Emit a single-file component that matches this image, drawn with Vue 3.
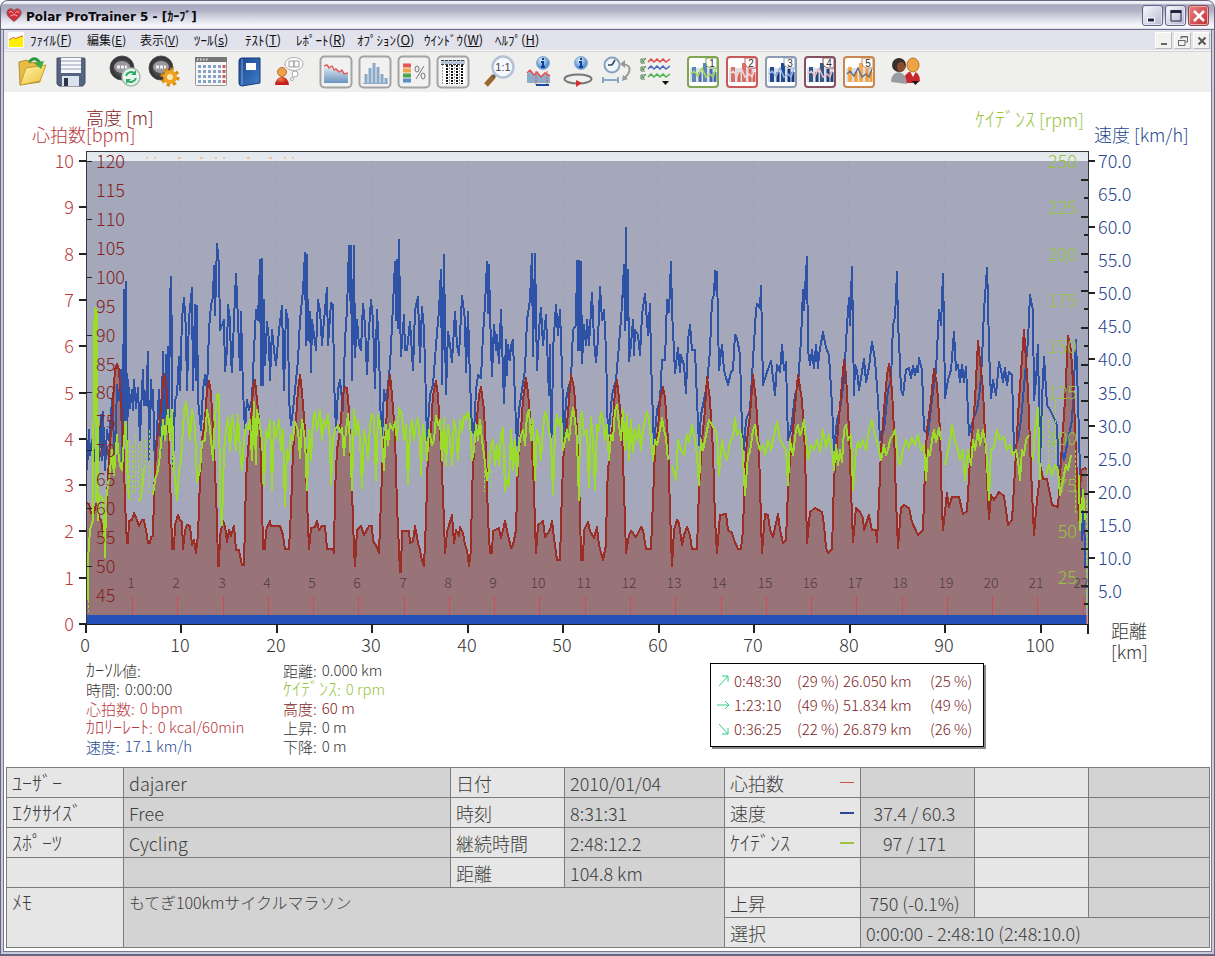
<script setup>
const menus = [
  { text: 'ﾌｧｲﾙ', key: 'F', kana: true },
  { text: '編集', key: 'E' },
  { text: '表示', key: 'V' },
  { text: 'ﾂｰﾙ', key: 's', kana: true },
  { text: 'ﾃｽﾄ', key: 'T', kana: true },
  { text: 'ﾚﾎﾟｰﾄ', key: 'R', kana: true },
  { text: 'ｵﾌﾟｼｮﾝ', key: 'O', kana: true },
  { text: 'ｳｲﾝﾄﾞｳ', key: 'W', kana: true },
  { text: 'ﾍﾙﾌﾟ', key: 'H', kana: true },
]

const presets = [
  { n: 1, frame: '#7fa653', bar: '#4a6aa8', line: '#a5d85a', bars: '#5f87b5' },
  { n: 2, frame: '#c9585a', bar: '#e2604f', line: '#f6d6d6', bars: '#d97165' },
  { n: 3, frame: '#8d9ab2', bar: '#16377e', line: '#8fb6e6', bars: '#24498f' },
  { n: 4, frame: '#85515e', bar: '#23406f', line: '#e9b9c4', bars: '#34578a' },
  { n: 5, frame: '#c8874f', bar: '#f59a2c', line: '#6d6f86', bars: '#f7ab4e' },
]

const bpmTicks = Array.from({ length: 11 }, (_, i) => ({ v: i, y: Math.round(624 - i * 46.3) }))
const altLabels = Array.from({ length: 16 }, (_, i) => ({ v: 45 + i * 5, y: Math.round(595 - i * 28.93) }))
const altTicks = altLabels.filter((t) => t.v % 10 === 0)
const speedLabels = Array.from({ length: 14 }, (_, i) => ({ v: (5 + i * 5).toFixed(1), y: Math.round(591 - i * 33.08), major: (5 + i * 5) % 10 === 0 }))
const cadLabels = Array.from({ length: 10 }, (_, i) => ({ v: 25 + i * 25, y: Math.round(577 - i * 46.2) }))
const cadTicks = Array.from({ length: 24 }, (_, i) => ({ y: Math.round(180 + i * 18.45), long: i % 2 === 0 }))
const kmTicks = Array.from({ length: 11 }, (_, i) => ({ v: i * 10, x: Math.round(86 + i * 95.45) }))
const laps = Array.from({ length: 22 }, (_, i) => ({ v: i + 1, x: Math.round(131 + i * 45.25), lx: Math.round(132 + i * 45.27) }))

const altitude = `87,503 89,504 91,513 94,513 96,504 98,504 99,518 101,520 103,533 105,533 108,478 110,440 112,428 113,400 115,370 117,364 119,370 121,400 123,430 125,500 126,525 127,543 128,543 129,521 132,520 134,513 137,520 139,526 142,520 144,520 146,530 148,543 150,543 151,537 153,536 154,495 155,470 157,440 160,420 162,392 164,374 166,382 168,412 170,480 171,505 172,549 174,549 175,525 178,515 180,520 182,522 183,549 185,530 187,525 190,526 192,545 194,540 196,553 198,535 200,480 202,440 205,420 207,390 209,381 211,393 213,430 215,470 217,520 218,566 219,566 220,535 223,521 225,526 227,542 229,530 231,536 234,526 236,550 239,550 242,565 244,565 246,480 248,450 251,420 253,390 255,380 257,400 260,430 262,500 263,549 265,549 266,530 270,521 271,526 280,526 283,535 285,549 289,549 291,510 293,450 296,420 298,390 300,375 302,392 305,430 307,500 309,549 311,528 315,527 317,521 319,530 322,526 325,526 327,549 333,549 334,553 335,490 337,450 340,430 343,395 345,387 347,388 349,410 350,445 352,490 354,550 355,566 357,530 361,526 364,535 369,526 372,526 373,541 377,547 379,553 381,500 383,450 386,428 388,390 390,375 392,395 395,435 397,505 399,550 400,572 401,572 402,531 409,531 410,543 413,541 415,526 418,543 420,550 422,560 424,566 426,520 428,450 431,430 433,395 436,381 438,395 441,450 444,520 445,553 447,532 452,515 454,543 456,530 459,536 460,527 463,533 465,545 467,550 469,566 471,550 472,490 474,450 476,430 479,395 481,387 484,410 486,450 488,520 490,553 492,553 493,531 499,528 501,538 503,530 505,521 508,535 511,548 513,545 516,530 518,460 521,430 523,400 526,378 528,392 531,430 534,490 535,525 536,553 538,525 543,521 545,537 550,530 552,521 554,538 557,560 560,560 562,490 564,445 567,425 569,400 571,375 574,388 577,430 580,510 581,560 583,560 584,530 588,522 590,531 594,538 597,527 599,545 603,560 606,545 607,490 610,440 613,425 615,390 617,380 619,398 622,430 624,490 626,553 629,535 631,531 636,537 641,527 643,530 646,549 651,549 653,500 655,450 658,430 660,400 663,387 665,398 668,440 670,510 671,540 672,566 674,530 677,520 679,523 682,545 684,535 687,527 690,535 692,549 697,549 699,490 702,440 705,410 707,377 710,400 713,450 715,520 717,553 720,515 726,514 728,530 732,533 734,540 738,549 741,549 743,530 745,470 747,440 750,415 753,375 756,400 759,450 761,520 762,553 765,514 768,515 770,530 773,537 778,514 780,530 783,543 786,540 788,490 790,460 793,430 796,395 798,375 802,400 805,450 807,543 810,512 815,508 822,512 824,525 826,548 828,553 832,549 834,480 838,430 841,395 844,360 846,375 849,430 851,490 853,542 856,508 860,512 863,518 864,530 869,515 872,530 876,530 877,542 879,500 881,450 884,410 887,375 889,364 892,390 894,430 896,500 898,548 901,508 904,505 909,508 912,522 918,535 923,530 925,470 927,430 931,400 934,369 937,385 940,430 942,510 943,530 947,493 949,507 952,497 959,497 963,514 967,511 970,460 975,400 978,341 983,390 987,480 989,519 991,495 994,500 999,492 1004,496 1008,525 1012,520 1015,470 1019,400 1024,330 1028,390 1031,470 1034,535 1037,500 1041,468 1043,479 1047,479 1052,505 1058,507 1061,460 1065,400 1068,336 1071,350 1074,400 1077,480 1079,520 1081,470 1085,468 1087,470`

const speed = `87,470 89,430 90,455 92,440 94,452 96,465 98,440 99,460 101,415 102,460 103,412 105,470 107,430 109,440 112,400 115,460 117,385 119,400 121,370 122,470 123,400 124,290 125,420 126,282 127,457 128,380 130,408 132,390 133,410 134,380 136,408 138,388 140,440 141,410 143,370 144,405 146,405 148,352 149,460 151,380 152,408 153,390 155,470 157,430 159,390 161,450 163,352 164,440 166,355 167,430 168,347 169,420 170,300 171,277 172,350 173,469 175,400 177,395 179,357 180,390 182,318 184,298 186,330 187,390 189,318 192,288 193,390 195,305 196,380 197,306 198,400 201,430 203,390 205,375 207,390 209,330 211,305 213,297 214,266 215,315 217,244 219,265 220,330 222,325 224,320 225,371 227,350 228,305 230,320 231,360 232,372 234,320 236,274 238,320 240,370 241,312 243,390 245,430 247,400 249,410 252,400 254,350 256,310 258,320 260,260 261,385 262,259 263,385 264,300 265,365 267,322 269,340 270,380 272,330 274,350 276,365 279,330 282,306 284,390 286,310 288,320 289,400 291,425 293,410 294,400 296,380 298,360 300,320 303,290 305,253 306,345 307,255 308,340 310,312 311,372 312,320 314,335 316,350 318,300 320,310 322,345 324,320 327,288 328,345 331,303 333,305 334,380 336,430 338,390 340,380 343,410 345,340 347,310 349,246 350,300 351,246 352,380 354,246 355,357 357,320 359,345 361,350 363,304 365,325 367,374 369,330 371,300 373,320 375,388 377,310 379,350 381,430 382,440 384,390 386,400 388,385 390,365 393,305 395,262 396,320 397,260 398,328 399,240 400,310 401,356 404,315 405,350 407,350 410,322 413,370 415,310 418,297 420,362 422,307 424,330 426,400 427,440 430,395 433,385 436,345 439,310 441,270 442,384 444,255 445,330 446,394 448,332 450,345 452,362 455,312 457,345 459,355 462,296 465,320 466,372 468,312 470,380 472,430 474,433 476,390 478,375 481,378 483,335 485,305 487,262 488,313 489,265 490,313 492,376 494,325 496,350 497,335 499,363 501,310 504,403 506,340 507,375 508,345 510,360 511,345 513,340 515,400 517,445 519,410 522,390 525,370 527,320 530,300 532,254 533,356 535,254 537,370 539,330 541,308 543,345 546,315 548,370 549,395 550,345 551,440 552,430 553,350 556,305 558,335 560,310 562,370 564,440 566,400 569,385 571,380 573,330 576,325 577,261 578,350 579,261 580,350 581,262 582,363 584,325 586,345 587,320 589,345 592,293 594,340 596,362 598,340 600,287 602,320 604,310 606,350 608,440 610,420 612,395 616,380 619,345 622,305 624,265 625,330 626,228 627,320 628,270 629,361 631,345 633,320 634,355 635,330 638,335 640,355 642,315 645,294 648,335 650,304 651,360 653,420 654,445 657,410 660,400 662,360 665,360 667,300 669,312 671,262 672,312 673,330 675,373 678,348 680,372 681,355 684,365 686,393 688,340 690,325 692,350 695,350 697,400 699,445 701,415 704,400 707,385 710,350 712,300 714,295 715,271 716,290 717,272 719,370 722,345 724,370 728,385 731,372 733,370 735,335 737,338 740,355 742,430 744,450 746,420 750,410 753,360 756,310 757,304 760,308 761,286 763,385 767,372 771,361 773,378 775,395 777,365 780,372 782,345 784,370 786,362 788,440 791,430 795,395 798,385 801,340 803,290 804,310 805,290 807,257 808,350 810,365 812,350 814,368 816,345 818,368 819,355 823,332 826,348 829,355 832,405 834,450 837,420 840,410 844,380 847,325 849,298 850,325 852,267 853,330 854,395 855,365 857,370 859,390 861,378 864,359 866,382 869,367 872,342 875,360 878,400 880,440 884,430 888,390 891,380 893,325 895,317 897,272 898,325 899,340 901,390 903,395 906,370 909,368 911,378 913,366 915,375 917,366 918,372 919,358 922,370 924,430 928,435 932,400 936,370 939,310 941,325 943,274 944,325 945,398 948,380 951,370 954,332 956,370 958,365 960,382 962,365 964,382 966,367 969,435 973,420 977,410 980,390 982,360 984,310 987,268 988,300 989,350 991,398 993,380 996,395 999,362 1001,370 1003,382 1005,368 1007,385 1009,372 1012,375 1014,450 1018,440 1021,420 1025,375 1028,340 1030,295 1033,310 1034,400 1036,380 1038,345 1040,465 1042,400 1044,357 1047,405 1050,410 1054,418 1057,425 1059,480 1062,450 1064,460 1068,440 1072,420 1076,340 1078,400 1080,470 1082,540 1084,500 1085,568`

const cadence = `88,600 88,560 90,530 93,520 94,330 95,308 96,500 97,310 98,520 100,495 103,500 105,557 106,500 110,470 112,450 114,475 117,435 118,450 120,466 122,470 124,440 126,422 128,490 130,500 M138,500 140,500 142,492 144,468 M153,495 155,480 158,470 160,455 163,420 165,440 168,410 170,440 172,410 174,470 177,500 179,470 181,460 184,412 186,402 188,420 190,440 192,410 195,428 197,482 200,470 202,442 205,440 207,410 209,420 211,440 213,460 215,418 217,395 219,394 220,500 222,525 224,450 226,430 228,418 230,450 232,415 234,430 236,450 238,415 240,450 242,470 244,440 246,425 248,430 250,420 252,460 254,402 256,464 257,410 259,420 262,440 264,485 266,430 268,438 270,420 272,490 274,422 276,438 279,420 281,450 283,430 285,506 287,450 289,460 291,435 293,440 295,422 298,430 300,458 302,420 305,440 307,490 309,430 311,460 313,420 315,412 317,430 320,410 322,440 324,420 326,428 328,414 330,440 331,485 333,440 335,430 338,425 340,432 342,428 344,455 346,430 348,414 350,440 352,490 354,410 356,435 358,420 360,440 362,488 364,430 366,440 368,460 370,425 372,414 374,418 376,480 378,415 380,422 382,440 384,470 386,425 388,445 390,424 393,430 395,422 397,440 399,408 402,415 404,440 406,425 408,484 410,430 412,420 414,440 416,425 418,418 420,440 421,475 423,425 425,435 427,460 429,430 432,445 434,440 436,416 438,425 440,420 442,460 444,418 446,465 448,425 450,440 452,465 454,420 456,430 458,460 460,420 462,432 464,415 466,420 468,412 470,420 472,460 474,450 476,425 478,440 480,420 482,440 484,455 487,480 489,470 491,445 493,440 495,465 497,445 499,465 501,435 503,428 505,490 507,480 509,485 511,430 513,470 515,440 517,475 519,445 521,435 523,430 525,445 527,415 529,410 531,440 533,420 535,480 537,430 539,440 541,460 543,430 545,412 547,418 549,430 551,440 553,494 555,430 557,415 559,425 561,418 563,450 565,440 567,430 569,440 571,420 573,408 575,420 577,440 579,500 580,420 582,412 584,435 587,430 589,487 591,418 593,440 595,490 597,425 599,430 601,412 603,420 605,440 607,425 609,460 611,435 613,440 615,410 617,405 619,425 621,440 623,410 625,450 627,415 629,460 631,420 633,452 635,430 637,440 639,425 641,450 643,430 645,420 647,412 649,420 651,440 653,460 655,440 657,445 659,435 662,418 664,430 666,438 668,460 M672,465 676,480 678,440 681,450 684,455 687,435 689,442 692,425 695,440 697,455 699,485 701,440 703,450 706,435 709,420 712,425 715,430 717,435 719,475 722,440 724,452 727,460 730,442 733,437 735,418 737,435 740,430 742,440 745,495 748,455 750,452 753,430 755,425 757,440 760,450 763,445 765,455 768,440 771,450 774,435 777,422 780,440 783,445 786,450 788,485 790,440 793,455 796,430 798,425 800,435 802,430 804,420 806,440 808,460 811,445 814,450 817,440 820,452 823,430 826,448 829,435 832,450 834,470 836,445 838,465 840,450 842,462 844,430 846,425 848,440 851,435 853,490 856,450 858,442 860,448 863,440 866,450 869,430 872,420 875,435 878,445 881,460 884,445 886,455 888,450 890,440 893,435 895,430 898,460 900,465 903,450 906,440 909,448 912,438 915,445 918,435 921,450 924,445 926,480 928,450 930,455 932,440 934,430 936,442 939,428 941,440 M945,465 948,450 950,442 952,425 955,440 958,450 960,460 963,450 965,480 968,450 971,465 973,440 975,450 978,430 980,445 983,430 986,445 989,500 991,450 994,447 997,430 1000,440 1004,437 1007,450 1010,445 1013,455 1016,450 1018,460 1020,480 1022,450 1024,455 1026,440 1029,435 M1033,460 1035,430 1038,408 1040,480 M1046,475 1049,465 1052,475 1055,465 1058,470 1060,495 1064,475 1066,465 1068,470 1071,455 M1079,475 1080,530 1083,490 1085,520`

const cadenceDots = 'M129,440V500M132,445V495M135,435V495M138,445V495M141,438V492M145,440V468M149,430V495M172,412V470M484,470V492M491,470V492M505,455V495M1043,410V450M1048,420V470M1055,400V460M1075,450V515M1086,500V610M88,560V612'

const cadencePath = 'M' + cadence

const cursorLeft = [
  { k: 'ｶｰｿﾙ', s: '値:', v: '', c: 'ink' },
  { k: '', s: '時間:', v: '0:00:00', c: 'ink' },
  { k: '', s: '心拍数:', v: '0 bpm', c: 'red' },
  { k: 'ｶﾛﾘｰﾚｰﾄ', s: ':', v: '0 kcal/60min', c: 'red' },
  { k: '', s: '速度:', v: '17.1 km/h', c: 'blue' },
]
const cursorRight = [
  { k: '', s: '距離:', v: '0.000 km', c: 'ink' },
  { k: 'ｹｲﾃﾞﾝｽ', s: ':', v: '0 rpm', c: 'green' },
  { k: '', s: '高度:', v: '60 m', c: 'maroon' },
  { k: '', s: '上昇:', v: '0 m', c: 'ink' },
  { k: '', s: '下降:', v: '0 m', c: 'ink' },
]
const slopes = [
  { d: 'M2 12L11 2M5 2H11V8', t: '0:48:30', p: '(29 %)', km: '26.050 km', q: '(25 %)' },
  { d: 'M0 7H12M8 3L12 7L8 11', t: '1:23:10', p: '(49 %)', km: '51.834 km', q: '(49 %)' },
  { d: 'M2 2L11 12M5 12H11V6', t: '0:36:25', p: '(22 %)', km: '26.879 km', q: '(26 %)' },
]
</script>

<template>
  <div class="window">
    <header class="titlebar">
      <svg class="logo" width="16" height="16" viewBox="0 0 16 16">
        <path d="M8 14.5C3 11 .8 8.500.8 5.500.8 1.500 6 .5 8 3.500 10 .5 15.200 1.500 15.200 5.500 15.200 8.500 13 11 8 14.500Z" fill="#cf2f3b" stroke="#8b6a70" stroke-width="1" />
        <path d="M3 5.500Q5 3 7.500 6M9 6Q11.500 3 13.500 5.500M4.500 9L8 7.500 11.500 9" stroke="#f4b5b5" fill="none" />
      </svg>
      <h1>Polar ProTrainer 5 - [ｶｰﾌﾞ]</h1>
      <div class="winbtns">
        <button aria-label="最小化"><svg width="20" height="20" viewBox="0 0 20 20"><path d="M4 14H12" stroke="#fff" stroke-width="5" /><path d="M5 14H11" stroke="#23233f" stroke-width="3" /></svg></button>
        <button aria-label="最大化"><svg width="20" height="20" viewBox="0 0 20 20"><path d="M5 5H15V15H5Z" fill="none" stroke="#23233f" stroke-width="1" /><path d="M4.500 5.500H15.500" stroke="#23233f" stroke-width="3" /></svg></button>
        <button class="close" aria-label="閉じる"><svg width="20" height="20" viewBox="0 0 20 20"><path d="M5 5L15 15M15 5L5 15" stroke="#fff" stroke-width="2.500" /></svg></button>
      </div>
    </header>

    <nav class="menubar">
      <svg width="16" height="16" viewBox="0 0 16 16"><rect width="16" height="16" fill="#fff" /><path d="M1 8L5 6 8 7 11 5 15 4V15H1Z" fill="#ffef00" /><path d="M1 8L5 5.500 8 6.500 11 5 15 4" stroke="#d07018" fill="none" /></svg>
      <div class="menus">
        <button v-for="m in menus" :key="m.key" :class="{ wider: m.kana }">{{ m.text }}(<u>{{ m.key }}</u>)</button>
      </div>
      <div class="docbtns">
        <button aria-label="文書を最小化"><svg width="16" height="16" viewBox="0 0 16 16"><path d="M5 11H11" stroke="#666" stroke-width="2" /></svg></button>
        <button aria-label="文書を元に戻す"><svg width="16" height="16" viewBox="0 0 16 16"><path d="M3.500 7.500H10V12.500H3.500ZM3 7.500H10.500M6 6V3.500H12.500V9H10.500M6 4H13" fill="none" stroke="#666" /></svg></button>
        <button aria-label="文書を閉じる"><svg width="16" height="16" viewBox="0 0 16 16"><path d="M4.500 4.500L11.500 11.500M11.500 4.500L4.500 11.500" stroke="#555" stroke-width="2" /></svg></button>
      </div>
    </nav>

    <div class="toolbar">
      <svg class="defs" width="0" height="0" aria-hidden="true">
        <defs>
          <linearGradient id="fold" x1="0" y1="0" x2="1" y2="1"><stop offset="0" stop-color="#fff7b0" /><stop offset="1" stop-color="#eebd35" /></linearGradient>
          <linearGradient id="book" x1="0" y1="0" x2="1" y2="1"><stop offset="0" stop-color="#1c4690" /><stop offset="1" stop-color="#3f7fca" /></linearGradient>
          <linearGradient id="haze" x1="0" y1="0" x2="0" y2="1"><stop offset="0" stop-color="#e2eaf3" /><stop offset="1" stop-color="#6c94bf" /></linearGradient>
          <linearGradient id="strip" x1="0" y1="0" x2="0" y2="1"><stop offset="0" stop-color="#e0e7ec" /><stop offset="1" stop-color="#e6ebf0" /></linearGradient>
          <radialGradient id="dark"><stop offset="0" stop-color="#777" /><stop offset="1" stop-color="#2c2c30" /></radialGradient>
          <radialGradient id="info" cx=".4" cy=".3"><stop offset="0" stop-color="#e5f1fc" /><stop offset="1" stop-color="#5f97d6" /></radialGradient>
          <radialGradient id="redman" cx=".4" cy=".3"><stop offset="0" stop-color="#f0794a" /><stop offset="1" stop-color="#c1201c" /></radialGradient>
        </defs>
      </svg>
      <div class="group">
        <button aria-label="開く"><svg viewBox="0 0 34 34"><path d="M4 7L12 5 14 8 24 7 25 27 5 30Z" fill="#e9bc45" stroke="#b78f2c" /><path d="M5 30L11 13 31 10 25 26Z" fill="url(#fold)" stroke="#c79e36" /><path d="M14 7Q20 0 25 8" fill="none" stroke="#2c9b3d" stroke-width="3" /><path d="M19 8L29 6 26 14Z" fill="#3fae46" /></svg></button>
        <button aria-label="保存"><svg viewBox="0 0 34 34"><path d="M3 3H30Q31 3 31 4V28L29 31H5L3 29Z" fill="#56657f" stroke="#414d63" /><rect x="7" y="3" width="20" height="15" fill="#f6f8fb" /><path d="M7 6H27M7 10H27M7 14H27" stroke="#b4bccb" stroke-width="1.500" /><rect x="8" y="21" width="17" height="10" fill="#dce3ec" /><rect x="10" y="23" width="4" height="8" fill="#2e3749" /></svg></button>
      </div>
      <div class="group wide">
        <button aria-label="転送"><svg viewBox="0 0 34 34"><circle cx="14" cy="13" r="12" fill="url(#dark)" stroke="#555" /><ellipse cx="14" cy="12" rx="8" ry="6" fill="#9a9a9e" /><path d="M9 12H19" stroke="#eee" stroke-width="3" stroke-dasharray="3 1" /><circle cx="23" cy="22" r="9" fill="#e9f6ee" stroke="#a9bdb0" stroke-width="1.500" /><path d="M18 21A5.500 5.500 0 0 1 27 18.500M28 23A5.500 5.500 0 0 1 19 25.500" fill="none" stroke="#2ea866" stroke-width="2" /><path d="M28 15V20H23ZM18 29V24H23Z" fill="#2ea866" /></svg></button>
        <button aria-label="機器の設定"><svg viewBox="0 0 34 34"><circle cx="14" cy="13" r="12" fill="url(#dark)" stroke="#555" /><ellipse cx="14" cy="12" rx="8" ry="6" fill="#9a9a9e" /><path d="M9 12H19" stroke="#eee" stroke-width="3" stroke-dasharray="3 1" /><circle cx="23" cy="22" r="7.500" fill="none" stroke="#d68a12" stroke-width="4" stroke-dasharray="3 2.900" /><circle cx="23" cy="22" r="5" fill="#f8e7b8" stroke="#f0a21c" stroke-width="4" /></svg></button>
      </div>
      <div class="group">
        <button aria-label="カレンダー"><svg viewBox="0 0 34 34"><rect x="1.500" y="2.500" width="31" height="28" rx="1" fill="#f7f7f7" stroke="#999" /><rect x="1" y="2" width="32" height="5" fill="#77777a" /><path d="M3 4.500H14" stroke="#ddd" stroke-width="2" stroke-dasharray="1.500 1.500" /><path d="M4 11.500H27M4 16.500H27M4 21.500H27M4 26.500H27" stroke="#86a3c5" stroke-width="3" stroke-dasharray="3 2" /><path d="M30 10V28" stroke="#cf5a5a" stroke-width="3" stroke-dasharray="3 2" /></svg></button>
        <button aria-label="日誌"><svg viewBox="0 0 34 34"><path d="M6 6Q6 3 9 3H27V28L9 31Q6 31 6 28Z" fill="url(#book)" stroke="#173a78" /><path d="M9 4V30" stroke="#7fa7dc" /><rect x="13" y="8" width="10" height="7" fill="#fff" /></svg></button>
        <button aria-label="人物"><svg viewBox="0 0 34 34"><circle cx="10" cy="17" r="4.500" fill="#eda24a" stroke="#bb6d26" /><path d="M3 30Q4 22 10 22 16 22 17 30Z" fill="url(#redman)" /><ellipse cx="22" cy="9" rx="9" ry="6.500" fill="#fff" stroke="#aaa" /><path d="M17 6H22V12H17ZM22 6H27V12H22Z" fill="none" stroke="#999" /><circle cx="23" cy="19" r="3" fill="#fff" stroke="#aaa" /><circle cx="20" cy="24" r="1.500" fill="#fff" stroke="#aaa" /></svg></button>
      </div>
      <div class="group">
        <button aria-label="カーブ"><svg viewBox="0 0 34 34"><rect class="frame" x="1.500" y="1.500" width="31" height="31" rx="4" /><path d="M5 11L8 14 11 12 14 16 17 14 20 17 23 15 26 19 29 18V28H5Z" fill="url(#haze)" /><path d="M5 11L8 10 10 13 13 11 15 15 17 14 20 17 23 15 25 19 29 18" fill="none" stroke="#e45a5c" stroke-width="1.500" /></svg></button>
        <button aria-label="分布"><svg viewBox="0 0 34 34"><rect class="frame" x="1.500" y="1.500" width="31" height="31" rx="4" /><path d="M8 28V19M12 28V13M16 28V8M20 28V12M24 28V19M28 28V23" stroke="#89a9c6" stroke-width="3" /><path d="M5 28.500H30" stroke="#89a9c6" /></svg></button>
        <button aria-label="ゾーン"><svg viewBox="0 0 34 34"><rect class="frame" x="1.500" y="1.500" width="31" height="31" rx="4" /><path d="M6 10.500H14" stroke="#e35950" stroke-width="4" /><path d="M6 15.500H14" stroke="#f0a24a" stroke-width="4" /><path d="M6 20.500H14" stroke="#4aa64d" stroke-width="4" /><path d="M6 25.500H14" stroke="#5a8ec4" stroke-width="4" /><path d="M27 11L19 24" stroke="#777" /><ellipse cx="20" cy="14" rx="2" ry="3" fill="none" stroke="#777" /><ellipse cx="26" cy="21" rx="2" ry="3" fill="none" stroke="#777" /></svg></button>
        <button aria-label="リスト"><svg viewBox="0 0 34 34"><rect class="frame" x="1.500" y="1.500" width="31" height="31" rx="4" /><rect x="5" y="5" width="24" height="24" fill="#fff" /><rect x="5" y="5" width="24" height="4" fill="#b8c4d8" /><path d="M11 10V29M16 10V29M21 10V29M26 10V29" stroke="#111" stroke-width="2" stroke-dasharray="2 1" /><path d="M6.500 9V29M13.500 9V29M18.500 9V29M23.500 9V29" stroke="#999" stroke-dasharray="2 1" /><path d="M5 5.500H29M5 9.500H29" stroke="#444" stroke-dasharray="3 1" /></svg></button>
      </div>
      <div class="group">
        <button aria-label="等倍表示"><svg viewBox="0 0 34 34"><path d="M3 30L11 21" stroke="#9c672c" stroke-width="5" /><path d="M10 22L13 19" stroke="#555" stroke-width="3" /><circle cx="20" cy="12" r="10.500" fill="#f5f9fd" stroke="#b5c2d6" stroke-width="2.500" /><text x="20" y="16" text-anchor="middle" font-size="11" fill="#444">1:1</text></svg></button>
        <button aria-label="カーブ情報"><svg viewBox="0 0 34 34"><path d="M5 19L9 16 12 20 16 18 19 22 23 19 28 22V28H5Z" fill="#8cacca" /><path d="M5 18L8 15 12 20 15 17 19 22 23 18 28 21" fill="none" stroke="#e05052" stroke-width="1.500" /><path d="M14 16V30M25 16V30" stroke="#dc5454" stroke-dasharray="2 1" /><path d="M14 30H27" stroke="#1749a3" stroke-width="2" /><circle cx="21" cy="8" r="6.500" fill="url(#info)" stroke="#8aa8cc" /><path d="M21 3V5M19 7H21V12M19 12H23" stroke="#143e93" stroke-width="2" fill="none" /></svg></button>
        <button aria-label="ラップ情報"><svg viewBox="0 0 34 34"><ellipse cx="17" cy="24" rx="13.500" ry="4.500" fill="none" stroke="#777" stroke-width="2" /><path d="M15 25L21 28 15 32Z" fill="#d83030" /><circle cx="20" cy="8" r="6.500" fill="url(#info)" stroke="#8aa8cc" /><path d="M20 3V5M18 7H20V12M18 12H22" stroke="#143e93" stroke-width="2" fill="none" /></svg></button>
        <button aria-label="時間と距離"><svg viewBox="0 0 34 34"><circle cx="12" cy="10" r="7.500" fill="#eef6fc" stroke="#87a2bd" stroke-width="2" /><path d="M12 10L15 5M12 10H8" stroke="#345" stroke-width="1.500" /><path d="M3 25H18M3 22V28M18 22V28" stroke="#88a8c5" stroke-width="2" /><path d="M22 9Q33 10 28 19L24 24" fill="none" stroke="#999" stroke-width="2" /><path d="M20 9L25 5V13ZM22 26L23 20 28 24Z" fill="#999" /></svg></button>
        <button aria-label="カーブの選択"><svg viewBox="0 0 34 34"><path d="M9 7L12 4 15 7 18 4 21 7 24 4 27 7 31 4" fill="none" stroke="#e24a4a" stroke-width="1.500" /><path d="M9 14L12 11 15 14 18 11 21 14 24 11 27 14 31 11" fill="none" stroke="#4a66b8" stroke-width="1.500" /><path d="M9 22L12 19 15 22 18 19 21 22 24 19 27 22 31 19" fill="none" stroke="#4cb04a" stroke-width="1.500" /><path d="M6 4H2V8H6M6 12H2V16H6M6 20H2V24H6M3 5L4 7 7 3M3 13L4 15 7 11M3 21L4 23 7 19" fill="none" stroke="#4a7d4a" /><path d="M23 26H30L26.500 30Z" fill="#111" /></svg></button>
      </div>
      <div class="group">
        <button v-for="p in presets" :key="p.n" :aria-label="'表示 ' + p.n">
          <svg viewBox="0 0 34 34">
            <rect x="2" y="2" width="30" height="30" rx="3" fill="#fff" :stroke="p.frame" stroke-width="2" />
            <rect x="4" y="13" width="26" height="14" fill="#d8e1eb" />
            <path d="M8 27V12M19 27V8" :stroke="p.bars" stroke-width="4" />
            <path d="M14 27V17M25 27V14M29 27V17" :stroke="p.bar" stroke-width="3" />
            <path d="M5 19L8 16 12 21 16 13 20 22 24 19 27 22 30 14" fill="none" :stroke="p.line" stroke-width="1.500" />
            <path d="M20 3H31V13H24Q20 12 20 8Z" fill="#fff" :stroke="p.frame" stroke-width="1" />
            <text x="26" y="12" text-anchor="middle" font-size="10" fill="#333">{{ p.n }}</text>
          </svg>
        </button>
      </div>
      <div class="group">
        <button aria-label="ユーザー"><svg viewBox="0 0 34 34"><path d="M15 28Q15 17 23 16 31 17 31 26L28 28Z" fill="#c8282c" /><path d="M21 16L24 22 27 16Z" fill="#fff" /><ellipse cx="24" cy="10" rx="6" ry="7" fill="#eda442" stroke="#b87428" /><path d="M2 27Q2 18 10 17 17 18 18 29Z" fill="#999da3" /><circle cx="10" cy="10" r="7" fill="#39302e" /><ellipse cx="12" cy="12" rx="4" ry="5" fill="#8b4d2e" /><path d="M23 26H30L26.500 30Z" fill="#111" /></svg></button>
      </div>
    </div>

    <main>
      <svg class="chart" viewBox="4 92 1207 568" role="img" aria-label="カーブ">
        <rect x="86" y="151" width="1002" height="10" fill="url(#strip)" />
        <rect x="86" y="161" width="1002" height="463" fill="#a4a8ba" />
        <path d="M181 161V615M277 161V615M372 161V615M468 161V615M563 161V615M658 161V615M754 161V615M849 161V615M945 161V615M1040 161V615" stroke="#9c9fb2" stroke-dasharray="2 3" />
        <path d="M146 158H300" stroke="#efc596" stroke-width="2" stroke-dasharray="2 6 2 22 3 19 3 12" />
        <path :d="'M87,616 L' + altitude + ' L1086,616Z'" fill="#987478" />
        <g fill="none" stroke-width="2" stroke-linejoin="round" shape-rendering="crispEdges">
          <polyline :points="speed" stroke="#2d52a6" />
          <polyline :points="altitude" stroke="#9c2d25" />
          <path :d="cadencePath" stroke="#9adb2b" />
          <path :d="cadenceDots" stroke="#9adb2b" stroke-width="1" stroke-dasharray="3 2" />
        </g>
        <g shape-rendering="crispEdges">
          <rect v-for="l in laps.slice(0, 21)" :key="l.v" :x="l.lx" y="596" width="1" height="19" fill="#cf4b55" />
          <rect x="1083" y="596" width="1" height="19" fill="#cf4b55" />
          <rect x="87" y="615" width="999" height="9" fill="#2450b8" />
          <rect x="1086" y="615" width="1" height="9" fill="#e05058" />
          <path d="M86.500 151V625M86 151.500H1089M1088.500 151V625" fill="none" stroke="#333740" />
          <path d="M86 624.500H1089" stroke="#222" />
          <path v-for="t in bpmTicks" :key="t.v" :d="`M79 ${t.y}H87`" stroke="#222" stroke-width="2" />
          <rect v-for="t in altTicks" :key="t.v" x="87" :y="t.y" width="5" height="1" fill="#222" />
          <path v-for="t in kmTicks" :key="t.v" :d="`M${t.x} 624V633`" stroke="#222" stroke-width="2" />
          <path d="M1088 624V634" stroke="#222" stroke-width="2" />
          <path v-for="t in cadTicks" :key="t.y" :d="`M${t.long ? 1081 : 1084} ${t.y}H1088`" stroke="#222" stroke-width="2" />
          <path v-for="t in speedLabels.filter((s) => s.major)" :key="t.v" :d="`M1088 ${t.y}H1095`" stroke="#222" stroke-width="2" />
        </g>
        <g class="axis">
          <g class="red">
            <text x="32" y="142">心拍数[bpm]</text>
            <text v-for="t in bpmTicks" :key="t.v" x="74" :y="t.y + 7" text-anchor="end">{{ t.v }}</text>
          </g>
          <g class="maroon">
            <text x="86" y="125">高度 [m]</text>
            <text v-for="t in altLabels" :key="t.v" x="96" :y="t.y + 7">{{ t.v }}</text>
          </g>
          <g class="green">
            <text x="1084" y="127" text-anchor="end"><tspan class="kana">ｹｲﾃﾞﾝｽ</tspan> [rpm]</text>
            <text v-for="t in cadLabels" :key="t.v" x="1077" :y="t.y + 7" text-anchor="end">{{ t.v }}</text>
          </g>
          <g class="blue">
            <text x="1094" y="142">速度 [km/h]</text>
            <text v-for="t in speedLabels" :key="t.v" x="1098" :y="t.y + 7">{{ t.v }}</text>
          </g>
          <g class="ink">
            <text v-for="t in kmTicks" :key="t.v" :x="t.x - 1" y="652" text-anchor="middle">{{ t.v }}</text>
            <text x="1111" y="638">距離</text>
            <text x="1111" y="659">[km]</text>
          </g>
        </g>
        <g class="laps">
          <text v-for="l in laps" :key="l.v" :x="l.x" y="588" text-anchor="middle">{{ l.v }}</text>
        </g>
      </svg>

      <section class="readout">
        <ul class="first"><li v-for="r in cursorLeft" :key="r.s + r.k" :class="r.c"><span><span class="kana">{{ r.k }}</span>{{ r.s }}</span><span>{{ r.v }}</span></li></ul>
        <ul><li v-for="r in cursorRight" :key="r.s + r.k" :class="r.c"><span><span class="kana">{{ r.k }}</span>{{ r.s }}</span><span>{{ r.v }}</span></li></ul>
        <div class="slopes">
          <div v-for="s in slopes" :key="s.t" class="slope">
            <svg width="14" height="14" viewBox="0 0 14 14"><path :d="s.d" fill="none" stroke="#2fd08a" /></svg>
            <span>{{ s.t }}</span><span>{{ s.p }}</span><span>{{ s.km }}</span><span>{{ s.q }}</span>
          </div>
        </div>
      </section>

      <table>
        <colgroup><col class="w117" /><col /><col class="w114" /><col class="w160" /><col class="w136" /><col class="w114" /><col class="w114" /><col class="w121" /></colgroup>
        <tbody>
          <tr><th class="kana">ﾕｰｻﾞｰ</th><td>dajarer</td><th>日付</th><td>2010/01/04</td><th>心拍数<i class="mark thin"></i></th><td></td><td class="light"></td><td></td></tr>
          <tr><th class="kana">ｴｸｻｻｲｽﾞ</th><td>Free</td><th>時刻</th><td>8:31:31</td><th>速度<i class="mark navy"></i></th><td class="mid">37.4 / 60.3</td><td class="light"></td><td></td></tr>
          <tr><th class="kana">ｽﾎﾟｰﾂ</th><td>Cycling</td><th>継続時間</th><td>2:48:12.2</td><th class="kana">ｹｲﾃﾞﾝｽ<i class="mark lime"></i></th><td class="mid">97 / 171</td><td class="light"></td><td></td></tr>
          <tr><th></th><td></td><th>距離</th><td>104.8 km</td><th></th><td></td><td class="light"></td><td></td></tr>
          <tr><th rowspan="2" class="top kana">ﾒﾓ</th><td colspan="3" rowspan="2" class="top memo">もてぎ100kmサイクルマラソン</td><th>上昇</th><td class="mid">750 (-0.1%)</td><td class="light"></td><td></td></tr>
          <tr><th>選択</th><td colspan="3">0:00:00 - 2:48:10 (2:48:10.0)</td></tr>
        </tbody>
      </table>
    </main>
  </div>
</template>

<style>
body { background: #fff; }
</style>

<style scoped>
* { box-sizing: border-box; }
.window {
  font-family: "Noto Sans CJK JP", "Liberation Sans", sans-serif;
  font-weight: 300;
  color: #444;
  background: #fff;
  border: solid #65677f;
  border-width: 1px 1px 2px;
  border-radius: 8px 8px 0 0;
  overflow: hidden;
  box-shadow: inset 0 0 0 2px #c9cbdc, inset 0 0 0 3px #77798f;
  padding: 0 3px 6px;
}
button { font: inherit; color: inherit; background: none; border: 0; padding: 0; margin: 0; }
.titlebar {
  display: flex; align-items: center; gap: 4px; height: 29px; margin: 0 -3px; padding: 0 5px;
  background: linear-gradient(#e8e8f2 0, #f6f6fa 2px, #a5a5bc 4px, #b4b4c8 10px, #dcdce8 18px, #fbfbfd 26px, #d8d8e6 28px);
  border-bottom: 1px solid #6b6d8b;
}
h1 { margin: 0; flex: 1; font: 700 12px "DejaVu Sans", "Noto Sans CJK JP", sans-serif; color: #0b0b10; }
.winbtns { display: flex; gap: 2px; }
.winbtns button { width: 21px; height: 21px; border: 1px solid #636787; border-radius: 3px; background: linear-gradient(135deg, #fafaff, #b4b6d0); box-shadow: inset 0 0 0 1px #e6e6f2; display: grid; place-items: center; }
.winbtns .close { background: linear-gradient(135deg, #e98080, #c22f38); border-color: #8f4755; box-shadow: inset 0 0 0 1px #e7a9a9; }
.menubar { display: flex; align-items: center; height: 21px; background: #e1e2ec; padding: 0 1px 0 4px; border-bottom: 1px solid #f6f6f6; }
.menus { flex: 1; display: grid; grid-template-columns: 57px 53px 54px 51px 51px 61px 67px 71px 60px; padding-left: 6px; }
.menus button { font-size: 12px; line-height: 18px; text-align: left; color: #111; font-weight: 400; white-space: nowrap; }
.menus .wider { font-size: 13px; }
.docbtns { display: flex; gap: 2px; }
.docbtns button { width: 17px; height: 17px; background: #f2f2f0; border: 1px solid #fff; border-right-color: #bbb; border-bottom-color: #bbb; display: grid; place-items: center; }
.toolbar { display: flex; align-items: center; gap: 8px; height: 41px; padding: 0 8px; background: #efefed; border-top: 1px solid #d5d5d5; }
.defs { position: absolute; }
.group { display: flex; }
.wide { margin-left: 7px; }
.group button { width: 39px; height: 38px; display: grid; place-items: center; }
.group svg { width: 34px; height: 34px; font-family: "Liberation Sans", sans-serif; font-weight: 400; }
.frame { fill: #f1f1f1; stroke: #a3a3a3; stroke-width: 2; }
.chart { display: block; width: 100%; height: auto; overflow: visible; }
.axis text { font-size: 18px; }
.axis .kana { font-size: 20px; }
.laps text { font-size: 14px; fill: #4c3c42; }
.ink { color: #333; fill: #333; }
.red { color: #b8383e; fill: #b8383e; }
.maroon { color: #832222; fill: #832222; }
.green { color: #96c43c; fill: #96c43c; }
.blue { color: #27488f; fill: #27488f; }
.readout { display: flex; align-items: flex-start; font-size: 15px; line-height: 20px; min-height: 107px; padding-left: 82px; }
ul { list-style: none; margin: 0; padding: 0; white-space: nowrap; }
ul.first { width: 197px; }
li { display: flex; gap: 5px; height: 19px; line-height: 19px; }
li .kana { font-size: 18px; }
.slopes { margin: 3px 227px 0 auto; border: 1px solid #000; box-shadow: 2px 2px 0 #888; padding: 5px 6px; color: #7b1d1d; background: #fff; }
.slope { display: grid; grid-template-columns: 17px 63px 46px 87px 47px; line-height: 24px; align-items: center; white-space: nowrap; }
table { width: calc(100% - 3px); margin: 0 1px 0 2px; border-collapse: collapse; table-layout: fixed; font-size: 18px; line-height: 24px; }
.w117 { width: 117px; } .w114 { width: 114px; } .w160 { width: 160px; } .w136 { width: 136px; } .w121 { width: 121px; }
th, td { height: 30px; padding: 2px 5px; border: 1px solid #7b7b7b; text-align: left; font-weight: 300; white-space: nowrap; background: #d3d3d3; color: #3d3d3d; }
th, .light { background: #e6e6e6; }
th.kana { font-size: 20px; }
.mid { padding-right: 11px; text-align: center; }
.top { vertical-align: top; }
.memo { font-size: 16px; }
.mark { float: right; width: 14px; height: 2px; margin: 11px 1px 0 0; background: #cf5648; }
.thin { height: 1px; }
.navy { background: #2f4693; }
.lime { background: #9dc43e; }
</style>
